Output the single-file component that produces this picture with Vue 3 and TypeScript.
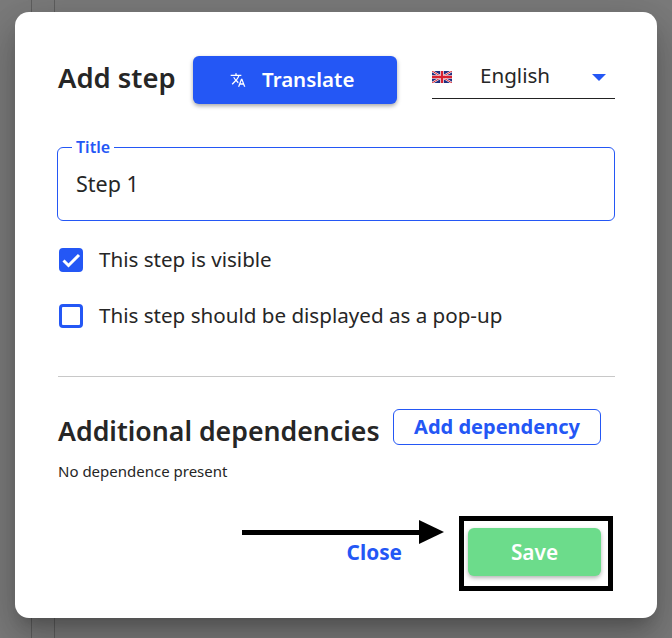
<template>
  <div class="backdrop">
    <i class="bg-line bg-line-a"></i>
    <i class="bg-line bg-line-b"></i>
    <section class="dialog">
      <header class="head">
        <h2>Add step</h2>
        <button type="button" class="translate">
          <svg class="translate-icon" viewBox="0 0 24 24" width="16" height="16" fill="currentColor">
            <path d="M12.87 15.07l-2.54-2.51.03-.03A17.52 17.52 0 0 0 14.07 6H17V4h-7V2H8v2H1v2h11.17C11.5 7.92 10.44 9.75 9 11.35 8.07 10.32 7.3 9.19 6.69 8h-2c.73 1.63 1.73 3.17 2.98 4.56l-5.09 5.02L4 19l5-5 3.11 3.11.76-2.04zM18.5 10h-2L12 22h2l1.12-3h4.75L21 22h2l-4.5-12zm-2.62 7l1.62-4.33L19.12 17h-3.24z" />
          </svg>
          <span class="translate-label">{{ translateLabel }}</span>
        </button>
        <div class="lang">
          <svg class="flag" viewBox="0 0 60 36" width="20" height="12">
            <rect width="60" height="36" fill="#1f2f80" />
            <path d="M0 0L60 36M60 0L0 36" stroke="#fff" stroke-width="6" />
            <path d="M0 0L60 36M60 0L0 36" stroke="#d8202f" stroke-width="3" />
            <path d="M30 0V36M0 18H60" stroke="#fff" stroke-width="11" />
            <path d="M30 0V36M0 18H60" stroke="#d8202f" stroke-width="7" />
          </svg>
          <span class="lang-name">English</span>
          <i class="caret"></i>
        </div>
      </header>

      <fieldset class="field">
        <legend>Title</legend>
        <span class="field-value">Step 1</span>
      </fieldset>

      <ul class="checks">
        <li v-for="option in options" :key="option.label">
          <span class="box" :class="{ checked: option.checked }">
            <svg v-if="option.checked" viewBox="0 0 24 24" width="24" height="24">
              <path d="M4.5 12.5l5 5L20 7" fill="none" stroke="#fff" stroke-width="3" />
            </svg>
          </span>
          <span class="check-label">{{ option.label }}</span>
        </li>
      </ul>

      <hr />

      <div class="deps-head">
        <h3>Additional dependencies</h3>
        <button type="button" class="add-dep">Add dependency</button>
      </div>
      <p class="deps-empty">No dependence present</p>

      <footer class="actions">
        <div class="arrow"></div>
        <button type="button" class="close">Close</button>
        <div class="save-wrap">
          <button type="button" class="save">Save</button>
        </div>
      </footer>
    </section>
  </div>
</template>

<script setup lang="ts">
type Option = { label: string; checked: boolean };

const translateLabel = "Translate";

const options: Option[] = [
  { label: "This step is visible", checked: true },
  { label: "This step should be displayed as a pop-up", checked: false },
];
</script>

<style>
html,
body {
  margin: 0;
  background: #7a7a7a;
}
</style>

<style scoped>
.backdrop {
  position: relative;
  width: 672px;
  height: 638px;
  overflow: hidden;
  background: #7b7b7b;
  padding: 12px 15px 20px;
  box-sizing: border-box;
  font-family: "Noto Sans", "Open Sans", sans-serif;
  color: #262626;
}
.bg-line {
  position: absolute;
  top: 0;
  bottom: 0;
  width: 1px;
  background: #5f5f5f;
}
.bg-line-a {
  left: 31px;
}
.bg-line-b {
  left: 54px;
}
.dialog {
  position: relative;
  height: 606px;
  box-sizing: border-box;
  background: #fff;
  border-radius: 14px;
  padding: 44px 42px 0 43px;
  box-shadow: 0 11px 15px -7px rgba(0, 0, 0, 0.2), 0 24px 38px 3px rgba(0, 0, 0, 0.14), 0 9px 46px 8px rgba(0, 0, 0, 0.12);
}
.head {
  display: flex;
  align-items: flex-start;
  height: 48px;
}
h2,
h3 {
  margin: 0;
  font-weight: 600;
  white-space: nowrap;
}
h2 {
  width: 135px;
  font-size: 27.4px;
  line-height: 44px;
}
.translate {
  width: 204px;
  height: 48px;
  display: flex;
  align-items: center;
  padding: 0 0 0 37px;
  gap: 16px;
  border: 0;
  border-radius: 6px;
  background: #2457f5;
  color: #fff;
  font: 600 20.5px "Noto Sans", sans-serif;
  box-shadow: 0 2px 4px rgba(0, 0, 0, 0.35);
}
.translate-icon {
  flex: none;
}
.translate-label {
  margin-top: -2px;
}
.lang {
  width: 183px;
  height: 43px;
  margin-left: 35px;
  display: flex;
  align-items: center;
  box-sizing: border-box;
  border-bottom: 1px solid #222;
  padding-right: 9px;
  font-size: 20.6px;
}
.flag {
  flex: none;
}
.lang-name {
  margin-left: 28px;
  margin-top: -4px;
  flex: 1;
}
.caret {
  width: 0;
  height: 0;
  border-left: 7px solid transparent;
  border-right: 7px solid transparent;
  border-top: 7px solid #2457f5;
}
.field {
  margin: 35px 0 0 -1px;
  padding: 0 18px;
  height: 82px;
  box-sizing: border-box;
  border: 1px solid #2457f5;
  border-radius: 6px;
}
.field legend {
  padding: 0 4px;
  margin-left: -4px;
  font-size: 16px;
  font-weight: 600;
  line-height: 16px;
  color: #2457f5;
}
.field-value {
  display: block;
  margin-top: 15px;
  font-size: 21.5px;
  line-height: 28px;
}
.checks {
  list-style: none;
  margin: 27px 0 0;
  padding: 0;
  display: flex;
  flex-direction: column;
  gap: 32px;
}
.checks li {
  display: flex;
  align-items: center;
  gap: 16px;
  height: 24px;
  padding-left: 1px;
  font-size: 20.6px;
}
.check-label {
  margin-top: -2px;
}
.box {
  flex: none;
  width: 24px;
  height: 24px;
  box-sizing: border-box;
  display: flex;
  align-items: center;
  justify-content: center;
  border: 3px solid #2457f5;
  border-radius: 4px;
}
.box svg {
  flex: none;
}
.box.checked {
  background: #2457f5;
}
hr {
  margin: 48px 0 0;
  border: 0;
  border-top: 1px solid #c8c8c8;
}
.deps-head {
  display: flex;
  align-items: flex-start;
  margin-top: 32px;
}
.deps-head h3 {
  width: 335px;
  font-size: 26.7px;
  line-height: 44px;
}
.add-dep {
  width: 208px;
  height: 36px;
  box-sizing: border-box;
  background: #fff;
  border: 1.5px solid #2457f5;
  border-radius: 6px;
  color: #2457f5;
  font: 700 20px "Noto Sans", sans-serif;
  padding: 0 0 2px;
}
.deps-empty {
  margin: 8px 0 0;
  font-size: 15px;
  line-height: 20px;
}
.actions {
  position: relative;
  display: flex;
  align-items: center;
  justify-content: flex-end;
  margin-top: 47px;
  height: 48px;
  padding-right: 14px;
}
.close {
  border: 0;
  background: none;
  padding: 0;
  margin-right: 66px;
  color: #2457f5;
  font: 700 20.8px "Noto Sans", sans-serif;
}
.save-wrap {
  position: relative;
}
/* annotation frame painted over the screenshot */
.save-wrap::after {
  content: "";
  position: absolute;
  left: -9px;
  right: -12px;
  top: -12px;
  bottom: -15px;
  border: 5px solid #000;
}
.save {
  display: block;
  width: 133px;
  height: 48px;
  border: 0;
  border-radius: 6px;
  background: #6cdc8b;
  color: #fff;
  font: 600 20.8px "Noto Sans", sans-serif;
  box-shadow: 0 2px 4px rgba(0, 0, 0, 0.3);
}
.arrow {
  position: absolute;
  left: 184px;
  top: 2px;
  width: 178px;
  height: 5px;
  background: #000;
}
.arrow::after {
  content: "";
  position: absolute;
  left: 177px;
  top: -10px;
  border-left: 25px solid #000;
  border-top: 12.5px solid transparent;
  border-bottom: 12.5px solid transparent;
}
</style>
